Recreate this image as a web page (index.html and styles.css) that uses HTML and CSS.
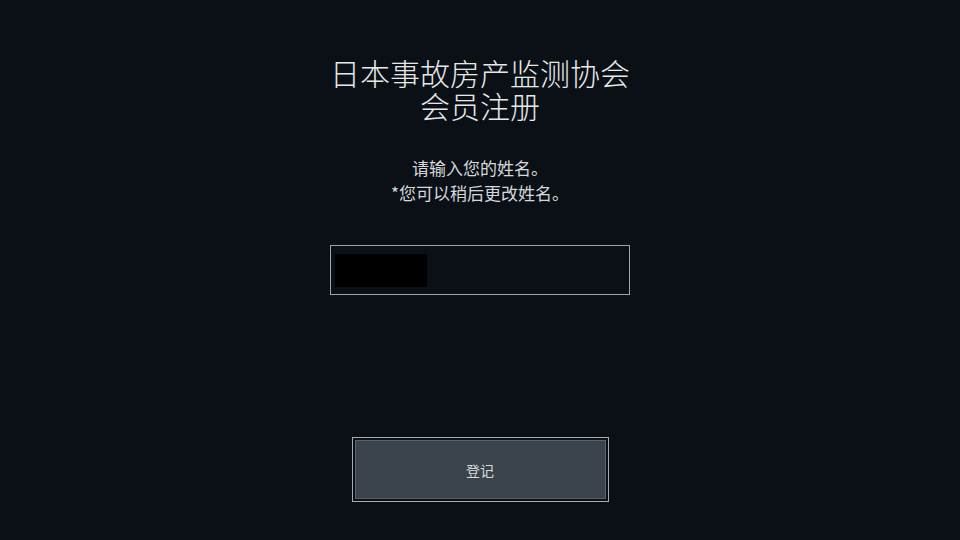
FILE: index.html
```html
<!DOCTYPE html>
<html lang="zh-CN">
<head>
<meta charset="utf-8">
<link rel="stylesheet" href="styles.css">
</head>
<body>
<main class="page">
  <h1 class="title"><span class="title-line">日本事故房产监测协会</span><span class="title-line">会员注册</span></h1>
  <p class="hint">请输入您的姓名。<br>*您可以稍后更改姓名。</p>
  <div class="field"><span class="redact"></span></div>
  <button class="submit"><span class="submit-inner">登记</span></button>
</main>
</body>
</html>
```
FILE: styles.css
```css
html, body {
  margin: 0;
  padding: 0;
  background: #0a1016;
  width: 960px;
  height: 540px;
  overflow: hidden;
}
.page {
  display: flex;
  flex-direction: column;
  align-items: center;
  font-family: "Noto Sans CJK SC", "Noto Sans", sans-serif;
  color: #e6e8ea;
  padding-top: 56px;
}
.title {
  margin: 0;
  font-size: 30px;
  font-weight: 300;
  line-height: 33px;
  text-align: center;
  display: flex;
  flex-direction: column;
  align-items: center;
}
.title-line {
  display: block;
  height: 33px;
}
.hint {
  margin: 33px 0 0;
  font-size: 17px;
  font-weight: 400;
  line-height: 25px;
  text-align: center;
  color: #d6d8da;
}
.field {
  margin-top: 40px;
  width: 300px;
  height: 50px;
  border: 1px solid #a0a4a8;
  display: flex;
  align-items: center;
  padding-left: 4px;
  box-sizing: border-box;
}
.redact {
  display: block;
  width: 92px;
  height: 33px;
  background: #000;
}
.submit {
  margin-top: 142px;
  width: 257px;
  height: 65px;
  padding: 2px;
  border: 1px solid #a8acb0;
  background: #0a1016;
  box-sizing: border-box;
  display: flex;
  cursor: pointer;
}
.submit-inner {
  flex: 1;
  display: flex;
  align-items: center;
  justify-content: center;
  background: #3a434b;
  border: 1px solid #5a6168;
  color: #d8dadc;
  font-family: "Noto Sans CJK SC", "Noto Sans", sans-serif;
  font-size: 14px;
}
```
